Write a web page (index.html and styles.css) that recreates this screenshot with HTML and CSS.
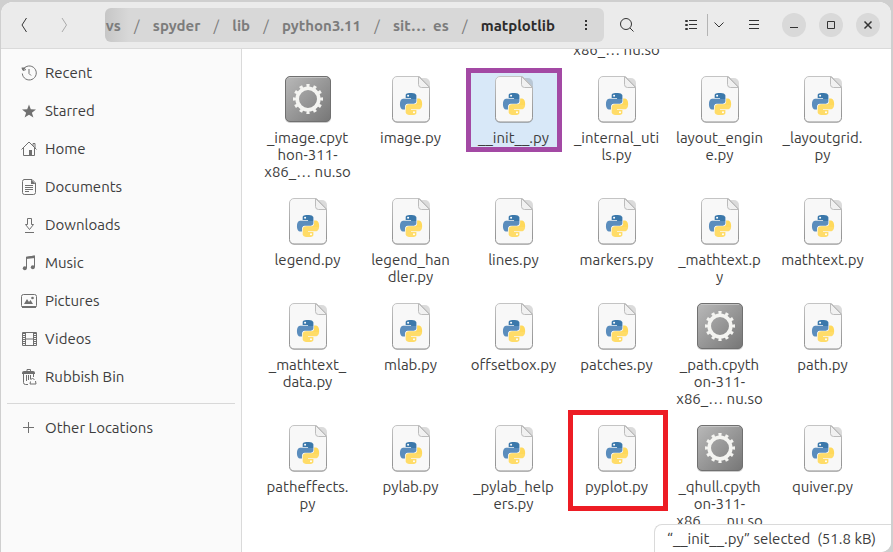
FILE: index.html
```
<!DOCTYPE html>
<html lang="en">
<head>
<meta charset="utf-8">
<title>matplotlib</title>
<link rel="stylesheet" href="styles.css">
</head>
<body>
<svg class="defs" width="0" height="0" aria-hidden="true">
  <defs>
    <linearGradient id="metal" x1="0" y1="0" x2="1" y2="1"><stop offset="0" stop-color="#b9b9b9"/><stop offset="1" stop-color="#767676"/></linearGradient>
    <linearGradient id="edge" x1="0" y1="0" x2="0" y2="1"><stop offset="0" stop-color="#c4c4c4"/><stop offset="1" stop-color="#8e8e8e"/></linearGradient>
    <linearGradient id="blue" x1="0" y1="0" x2="0" y2="1"><stop offset=".36" stop-color="#3b78ab"/><stop offset=".36" stop-color="#5b8dbd"/></linearGradient>
    <linearGradient id="yellow" x1="0" y1="0" x2="0" y2="1"><stop offset=".6" stop-color="#ffdc68"/><stop offset=".6" stop-color="#ffd95b"/></linearGradient>
    <path id="snake" d="M14.25.18l.9.2.73.26.59.3.45.32.34.34.25.34.16.33.1.3.04.26.02.2-.01.13V8.5l-.05.63-.13.55-.21.46-.26.38-.3.31-.33.25-.35.19-.35.14-.33.1-.3.07-.26.04-.21.02H8.77l-.69.05-.59.14-.5.22-.41.27-.33.32-.27.35-.2.36-.15.37-.1.35-.07.32-.04.27-.02.21v3.06H3.17l-.21-.03-.28-.07-.32-.12-.35-.18-.36-.26-.36-.36-.35-.46-.32-.59-.28-.73-.21-.88-.14-1.05-.05-1.23.06-1.22.16-1.04.24-.87.32-.71.36-.57.4-.44.42-.33.42-.24.4-.16.36-.1.32-.05.24-.01h.16l.06.01h8.16v-.83H6.18l-.01-2.75-.02-.37.05-.34.11-.31.17-.28.25-.26.31-.23.38-.2.44-.18.51-.15.58-.12.64-.1.71-.06.77-.04.84-.02 1.27.05z"/>
  </defs>
  <symbol id="py" viewBox="0 0 48 48">
    <rect x="5" y="3" width="38" height="45" rx="5" fill="#000" opacity=".14"/>
    <path d="M10 1.500h22.500L42.500 12v30.500a4.500 4.500 0 0 1-4.500 4.500H10a4.500 4.500 0 0 1-4.500-4.500V6A4.500 4.500 0 0 1 10 1.500z" fill="#f8f8f8" stroke="url(#edge)"/>
    <path d="M31.500 1.500v8a3 3 0 0 0 3 3h8z" fill="#f1f1f1" stroke="#bcbcbc"/>
    <g transform="translate(13 18) scale(.92)">
      <use href="#snake" fill="url(#blue)"/>
      <use href="#snake" fill="url(#yellow)" transform="rotate(180 12 12)"/>
      <circle cx="8.800" cy="3" r="1.100" fill="#fff"/><circle cx="15.200" cy="21" r="1.100" fill="#fff"/>
    </g>
  </symbol>
  <symbol id="so" viewBox="0 0 48 48">
    <rect x="1" y="3" width="46" height="45" rx="5" fill="#000" opacity=".2"/>
    <rect x="1.500" y="1.500" width="45" height="45" rx="4.500" fill="url(#metal)" stroke="#707070"/>
    <path d="M5 2.500h38" stroke="#d0d0d0" opacity=".7"/>
    <circle cx="24" cy="24" r="10.800" fill="none" stroke="#f4f4f1" stroke-width="3.600"/>
    <circle cx="24" cy="24" r="13.500" fill="none" stroke="#f4f4f1" stroke-width="3" pathLength="24" stroke-dasharray=".9 1.100" stroke-dashoffset=".45"/>
  </symbol>
</svg>

<div class="window">
  <header class="bar">
    <button class="tool" aria-label="Back"><svg width="16" height="16" viewBox="0 0 16 16"><path d="M10.500 1 6 8l4.500 7" class="dark"/></svg></button>
    <button class="tool forward" aria-label="Forward" disabled><svg width="16" height="16" viewBox="0 0 16 16"><path d="M6 1l4.500 7L6 15" class="dark"/></svg></button>
    <nav class="path" aria-label="Location">
      <a href="#">vs</a><span class="sep">/</span><a href="#">spyder</a><span class="sep">/</span><a href="#">lib</a><span class="sep">/</span><a href="#">python3.11</a><span class="sep">/</span><a href="#">sit…&nbsp; es</a><span class="sep">/</span><a href="#" class="current">matplotlib</a>
      <button class="more" aria-label="Folder menu"><svg width="4" height="12" viewBox="0 0 4 12"><path d="M1 1h2v2H1zM1 5h2v2H1zM1 9h2v2H1z" fill="#333"/></svg></button>
    </nav>
    <button class="tool search" aria-label="Search"><svg width="16" height="16" viewBox="0 0 16 16"><circle cx="7" cy="7" r="5.500" class="dark"/><path d="m11 11 3.500 3.500" class="dark"/></svg></button>
    <div class="views">
      <button class="tool list" aria-label="List view"><svg width="14" height="12" viewBox="0 0 14 12"><path d="M1.500 1.500h2v1h-2zM1.500 5.500h2v1h-2zM1.500 9.500h2v1h-2zM5 1.500h8M5 5.500h8M5 9.500h8" class="dark"/></svg></button>
      <button class="tool drop" aria-label="View options"><svg width="12" height="8" viewBox="0 0 12 8"><path d="m1.500 1.500 4.500 4.500 4.500-4.500" class="dark"/></svg></button>
    </div>
    <button class="tool" aria-label="Main menu"><svg width="12" height="12" viewBox="0 0 12 12"><path d="M1 1.500h10M1 5.500h10M1 9.500h10" class="dark"/></svg></button>
    <div class="controls">
      <button aria-label="Minimise"><svg width="10" height="10" viewBox="0 0 10 10"><path d="M1 7.500h8" class="dark"/></svg></button>
      <button aria-label="Maximise"><svg width="10" height="10" viewBox="0 0 10 10"><path d="M1.500 1.500h7v7h-7z" class="dark"/></svg></button>
      <button aria-label="Close"><svg width="10" height="10" viewBox="0 0 10 10"><path d="m1.500 1.500 7 7m0-7-7 7" class="dark close"/></svg></button>
    </div>
  </header>

  <div class="body">
    <aside class="side">
      <a href="#"><svg viewBox="0 0 16 16"><path d="M2.200 4.500a7 7 0 1 1-.900 4M1 3l1.200 2.500L5 4.500M8 4v4.500l2 2"/><path d="M.500 2.500 5 2.500 2 5.500z" class="fill"/></svg>Recent</a>
      <a href="#"><svg viewBox="0 0 16 16"><path class="fill" d="m8 1.500 1.800 4.800 5.200.200-4.100 3.200 1.500 4.800L8 11.700l-4.400 2.800 1.500-4.800L1 6.500l5.200-.200z"/></svg>Starred</a>
      <a href="#"><svg viewBox="0 0 16 16"><path d="M.500 8.500 8 1l7.500 7.500M2.500 7v7.500h11V7M12 5V2.500h2V7"/><path class="fill" d="M8 9h3v6H8z"/></svg>Home</a>
      <a href="#"><svg viewBox="0 0 16 16"><path d="M3 .500h8l3.500 3.500v9.500a2 2 0 0 1-2 2h-9a2 2 0 0 1-2-2v-11a2 2 0 0 1 2-2M4 6.500h8M4 8.500h8M4 10.500h8M4 12.500h4"/><path class="fill" d="M10 .500 14.500 5H10z"/></svg>Documents</a>
      <a href="#"><svg viewBox="0 0 16 16"><path d="M6.500 1.500h4v6h2l-4 5-4-5h2zM4 15.500h9"/></svg>Downloads</a>
      <a href="#"><svg viewBox="0 0 16 16"><path d="M5.500 13V2.500L13.500 1v11"/><path class="fill" d="M5 1.700 14 .500V3L5 4z"/><circle class="fill" cx="3.800" cy="13.200" r="2"/><circle class="fill" cx="11.800" cy="12.200" r="2"/></svg>Music</a>
      <a href="#"><svg viewBox="0 0 16 16"><rect x=".500" y="1.500" width="15" height="13" rx="2"/><path class="fill" d="M1 13h14v2H1zM3 11l3-5 2 3 1.500-2L12 11z"/><circle class="fill" cx="11.500" cy="5" r="1.300"/></svg>Pictures</a>
      <a href="#"><svg viewBox="0 0 16 16"><path d="M1.500 1.500h14v13h-14zM4.500 1.500v13M12.500 1.500v13M4.500 8h8"/><path d="M3 2v12M14 2v12" stroke-dasharray="1 1" stroke-width="2"/></svg>Videos</a>
      <a href="#"><svg viewBox="0 0 16 16"><path d="M2.500 5v8.500a2 2 0 0 0 2 2H7M12.500 5v3M5.500 6v6M7.500 6v5M9.500 6v4M6 2V.500h3.500V2"/><path class="fill" d="M1 4a2 2 0 0 1 2-2h9a2 2 0 0 1 2 2v1H1z"/><path d="m9.500 11 2-2 2 2m1 1 .500 3H9l.500-2.500"/></svg>Rubbish Bin</a>
      <hr>
      <a href="#"><svg viewBox="0 0 16 16"><path d="M2 7.500h11M7.500 2v11"/></svg>Other Locations</a>
    </aside>

    <main class="files">
      <ul class="grid">
        <li class="clipped"><span>x86_… nu.so</span></li>
        <li><svg><use href="#so"/></svg><span>_image.cpyt<br>hon-311-<br>x86_… nu.so</span></li>
        <li><svg><use href="#py"/></svg><span>image.py</span></li>
        <li class="selected"><svg><use href="#py"/></svg><span>__init__.py</span></li>
        <li><svg><use href="#py"/></svg><span>_internal_uti<br>ls.py</span></li>
        <li><svg><use href="#py"/></svg><span>layout_engin<br>e.py</span></li>
        <li><svg><use href="#py"/></svg><span>_layoutgrid.<br>py</span></li>
        <li><svg><use href="#py"/></svg><span>legend.py</span></li>
        <li><svg><use href="#py"/></svg><span>legend_han<br>dler.py</span></li>
        <li><svg><use href="#py"/></svg><span>lines.py</span></li>
        <li><svg><use href="#py"/></svg><span>markers.py</span></li>
        <li><svg><use href="#py"/></svg><span>_mathtext.p<br>y</span></li>
        <li><svg><use href="#py"/></svg><span>mathtext.py</span></li>
        <li><svg><use href="#py"/></svg><span>_mathtext_<br>data.py</span></li>
        <li><svg><use href="#py"/></svg><span>mlab.py</span></li>
        <li><svg><use href="#py"/></svg><span>offsetbox.py</span></li>
        <li><svg><use href="#py"/></svg><span>patches.py</span></li>
        <li><svg><use href="#so"/></svg><span>_path.cpyth<br>on-311-<br>x86_… nu.so</span></li>
        <li><svg><use href="#py"/></svg><span>path.py</span></li>
        <li><svg><use href="#py"/></svg><span>patheffects.<br>py</span></li>
        <li><svg><use href="#py"/></svg><span>pylab.py</span></li>
        <li><svg><use href="#py"/></svg><span>_pylab_help<br>ers.py</span></li>
        <li class="marked"><svg><use href="#py"/></svg><span>pyplot.py</span></li>
        <li><svg><use href="#so"/></svg><span>_qhull.cpyth<br>on-311-<br>x86_… nu.so</span></li>
        <li><svg><use href="#py"/></svg><span>quiver.py</span></li>
      </ul>
      <div class="status" role="status">“__init__.py” selected&nbsp; (51.8 kB)</div>
    </main>
  </div>
</div>
</body>
</html>
```
FILE: styles.css
```
*, *::before { box-sizing: border-box; }

body {
  margin: 0;
  height: 100vh;
  padding: 2px 2px 0 1px;
  background: #cfcfcf;
  color: #3d3d3d;
  font: 15px/17px Ubuntu, "Noto Sans", sans-serif;
  overflow: hidden;
}

a { color: inherit; text-decoration: none; }

button {
  display: flex;
  align-items: center;
  justify-content: center;
  padding: 0;
  border: 0;
  background: none;
}

.defs { position: absolute; }
.dark { fill: none; stroke: #333; }
.close { stroke-width: 1.5; }

.window {
  display: flex;
  flex-direction: column;
  height: 100%;
  background: #fff;
  border-radius: 12px 12px 10px 0;
  overflow: hidden;
}

.bar {
  display: flex;
  align-items: center;
  flex: none;
  height: 47px;
  padding: 0 11px 0 6px;
  background: #ebebeb;
  border-bottom: 1px solid #dadada;
}

.tool { width: 34px; height: 34px; flex: none; }
.forward { margin: 0 24px 0 6px; opacity: .35; }
.search { margin: 0 31px 0 6px; }

.path {
  display: flex;
  align-items: center;
  justify-content: flex-end;
  flex: 1;
  min-width: 0;
  height: 34px;
  border-radius: 6px;
  background: linear-gradient(90deg, #c6c6c6, #d8d8d8 24px);
  color: #7c7c7c;
  font-weight: 700;
  white-space: nowrap;
  overflow: hidden;
}
.sep { flex: none; width: 32px; text-align: center; font-weight: 400; }
.current { color: #2c2c2c; }
.more { flex: none; width: 36px; height: 34px; margin-left: 13px; }

.views { display: flex; align-items: center; margin-right: 7px; }
.list { width: 32px; }
.drop { width: 23px; height: 22px; border-left: 1px solid #b4b4b4; }

.controls { display: flex; gap: 13px; margin-left: 11px; }
.controls button {
  width: 24px;
  height: 24px;
  border-radius: 50%;
  background: #d9d9d9;
}

.body { display: flex; flex: 1; min-height: 0; }

.side {
  flex: none;
  width: 241px;
  padding: 5px 6px;
  background: #fafafa;
  border-right: 1px solid #dadada;
}
.side a {
  display: flex;
  align-items: center;
  gap: 8px;
  height: 38px;
  padding: 0 0 2px 14px;
}
.side svg {
  width: 16px;
  height: 16px;
  margin-top: 2px;
  fill: none;
  stroke: #707070;
}
.side .fill { fill: #707070; stroke: none; }
.side hr {
  height: 1px;
  margin: 7px 0 5px;
  border: 0;
  background: #d8d8d8;
}

.files {
  position: relative;
  flex: 1;
  min-width: 0;
  overflow: hidden;
}
.grid {
  display: grid;
  grid-template-columns: repeat(6, 1fr);
  gap: 17px 0;
  margin: -8px 0 0;
  padding: 0 17px 0 14px;
  list-style: none;
}
.grid li {
  position: relative;
  display: flex;
  flex-direction: column;
  align-items: center;
  gap: 6px;
  text-align: center;
  white-space: nowrap;
}
.grid svg { width: 48px; height: 48px; }
.grid .clipped { grid-column: 4; }
.clipped + li { grid-column: 1; }

.selected::before,
.marked::before {
  content: "";
  position: absolute;
  border: 5px solid #a349a4;
}
.selected::before {
  inset: -7px 3px auto 4px;
  height: 84px;
  background: #d8e8f8;
}
.selected > * { position: relative; }
.marked::before {
  inset: -14px 0 auto 3px;
  height: 101px;
  border-color: #ed1c24;
}

.status {
  position: absolute;
  right: 0;
  bottom: 0;
  height: 28px;
  padding: 5px 15px 5px 12px;
  border: 1px solid #dadada;
  border-width: 1px 0 0 1px;
  border-radius: 8px 0 0;
  background: #fff;
  white-space: nowrap;
}
```
